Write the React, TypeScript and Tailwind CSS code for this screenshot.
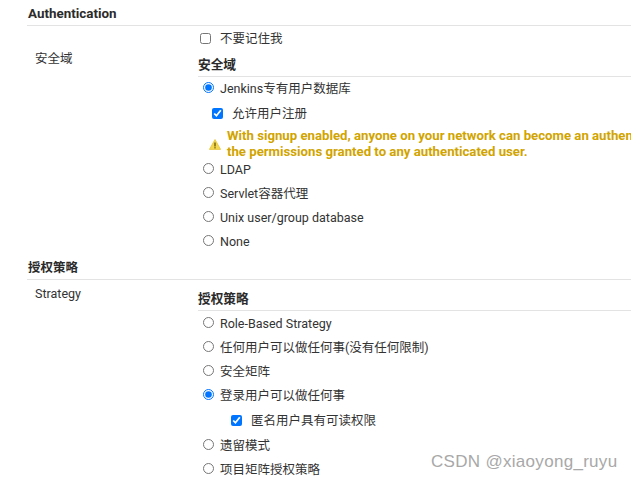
import { ReactNode } from "react";

const font = { sans: "font-['Roboto','Noto_Sans_CJK_SC',sans-serif]" };

function SectionTitle({ children, className = "h-[25px]" }: { children: ReactNode; className?: string }) {
  return (
    <div className={`border-b border-[#e3e3e3] font-bold leading-[25px] text-[#2b2b2b] ${className}`}>
      {children}
    </div>
  );
}

function Radio({ label, checked = false }: { label: string; checked?: boolean }) {
  return (
    <label className="flex h-6 items-center pl-[5px]">
      <input type="radio" readOnly checked={checked} className="mb-[3px] h-[11px] w-[11px] shrink-0" />
      <span className="ml-[6px] whitespace-nowrap">{label}</span>
    </label>
  );
}

function Check({ label, className = "" }: { label: string; className?: string }) {
  return (
    <label className={`flex h-6 items-center ${className}`}>
      <input type="checkbox" readOnly checked className="mb-[2px] h-[11px] w-[11px] shrink-0" />
      <span className="ml-[9px] whitespace-nowrap">{label}</span>
    </label>
  );
}

function WarnIcon() {
  return (
    <svg width="12" height="11" viewBox="0 0 12 11" className="mt-[13px] shrink-0">
      <path d="M6 .5 11.6 10.4H.4Z" fill="#f3d84f" stroke="#e6c43a" strokeWidth="0.8" strokeLinejoin="round" />
      <rect x="5.4" y="3.5" width="1.2" height="4" fill="#5c4a00" />
      <rect x="5.4" y="8.2" width="1.2" height="1.2" fill="#5c4a00" />
    </svg>
  );
}

export default function App() {
  return (
    <div className={`relative h-[482px] w-[631px] overflow-hidden bg-white pl-[27px] text-[12.5px] text-[#333] ${font.sans}`}>
      <SectionTitle className="h-[26px] pl-px pt-px text-[13.4px]">Authentication</SectionTitle>

      <div className="flex">
        <div className="w-[171px] shrink-0 pl-2 pt-[24px] leading-[17px]">安全域</div>
        <div className="min-w-0 flex-1">
          <label className="flex h-[25px] items-center pl-[2px] pt-[2px]">
            <input type="checkbox" readOnly className="mb-[3px] h-[11px] w-[11px] shrink-0" />
            <span className="ml-[9px]">不要记住我</span>
          </label>
          <SectionTitle className="mt-px h-[25px] text-[12.7px]">安全域</SectionTitle>
          <Radio label="Jenkins专有用户数据库" checked />
          <Check label="允许用户注册" className="mt-px pl-[14px]" />
          <div className="flex h-[32px] items-start pl-[11px] text-[13.2px] font-bold leading-4 text-[#d1a400]">
            <WarnIcon />
            <div className="ml-[6px] mt-[2px] whitespace-nowrap">
              With signup enabled, anyone on your network can become an authenticated user and gain
              <br />
              the permissions granted to any authenticated user.
            </div>
          </div>
          <Radio label="LDAP" />
          <Radio label="Servlet容器代理" />
          <Radio label="Unix user/group database" />
          <Radio label="None" />
        </div>
      </div>

      <SectionTitle className="mt-[1px] h-[25px] pl-px text-[12.5px]">授权策略</SectionTitle>

      <div className="flex">
        <div className="w-[171px] shrink-0 pl-2 pt-[5px] leading-[17px]">Strategy</div>
        <div className="min-w-0 flex-1 pt-[6px]">
          <SectionTitle className="mb-px h-[25px] text-[12.7px]">授权策略</SectionTitle>
          <Radio label="Role-Based Strategy" />
          <Radio label="任何用户可以做任何事(没有任何限制)" />
          <Radio label="安全矩阵" />
          <Radio label="登录用户可以做任何事" checked />
          <Check label="匿名用户具有可读权限" className="mt-px pl-[33px]" />
          <div className="h-px" />
          <Radio label="遗留模式" />
          <Radio label="项目矩阵授权策略" />
        </div>
      </div>

      <div className="absolute left-[431px] top-[452px] font-['Liberation_Sans',sans-serif] text-[17px] leading-5 tracking-[0.3px] text-[#a8a8a8]">
        CSDN @xiaoyong_ruyu
      </div>
    </div>
  );
}
